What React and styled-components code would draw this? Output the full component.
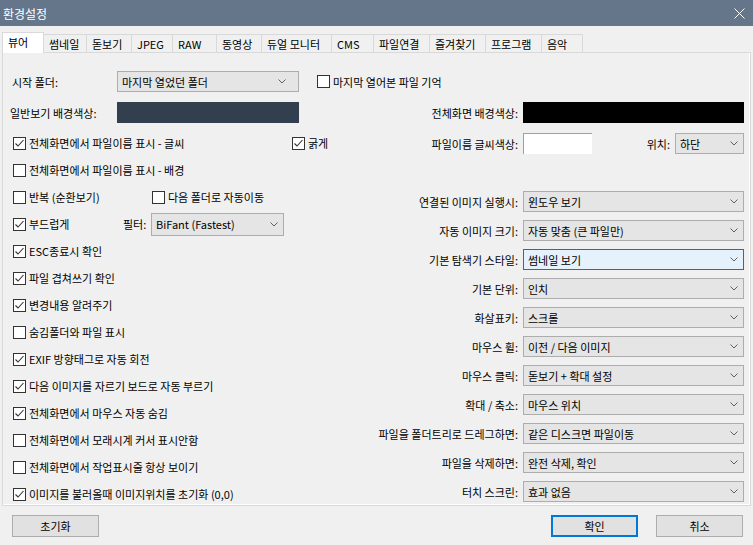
import React from "react";
import styled, { createGlobalStyle } from "styled-components";

const GlobalStyle = createGlobalStyle`
  html, body {
    margin: 0;
    padding: 0;
    background: #f0f0f0;
  }
  body {
    font-family: "Noto Sans CJK KR", "Noto Sans", sans-serif;
    font-size: 11px;
    color: #000;
  }
`

const Window = styled.div`
  width: 753px;
  height: 545px;
  background: #f0f0f0;
  display: flex;
  flex-direction: column;
  overflow: hidden;
`

const TitleBar = styled.div`
  height: 26px;
  flex: none;
  background: #65768a;
  color: #fff;
  display: flex;
  align-items: center;
  justify-content: space-between;
  padding: 0 8px 0 3px;
  font-size: 12px;
`

const TabStrip = styled.div`
  display: flex;
  align-items: flex-end;
  height: 20px;
  margin-top: 6px;
  padding-left: 2px;
  position: relative;
  z-index: 1;
`

const Tab = styled.div`
  box-sizing: border-box;
  width: ${p => p.$w}px;
  height: ${p => (p.$active ? 21 : 18)}px;
  margin-bottom: ${p => (p.$active ? -1 : 0)}px;
  line-height: 18px;
  padding-left: 5px;
  white-space: nowrap;
  background: ${p => (p.$active ? "#fff" : "#f0f0f0")};
  border: 1px solid #d9d9d9;
  border-bottom: none;
  border-left: ${p => (p.$first ? "1px solid #d9d9d9" : "none")};
`

const Panel = styled.div`
  box-sizing: border-box;
  height: 454px;
  margin: 0 2px;
  border: 1px solid #d9d9d9;
  box-shadow: inset -1px -1px 0 #fff;
  padding: 18px 6px 0 7px;
`

const TopRow = styled.div`
  display: flex;
  align-items: center;
  height: 21px;
`

const FieldLabel = styled.span`
  width: ${p => p.$w}px;
  padding-left: ${p => p.$indent || 0}px;
  box-sizing: border-box;
  flex: none;
  white-space: nowrap;
`

const SelectBox = styled.div`
  box-sizing: border-box;
  width: ${p => (p.$w ? `${p.$w}px` : "100%")};
  height: ${p => p.$h || 21}px;
  flex: none;
  display: flex;
  align-items: center;
  justify-content: space-between;
  padding: 0 ${p => p.$arrow || 5}px 0 4px;
  background: ${p => (p.$focus ? "#e5f1fb" : "#e5e5e5")};
  border: 1px solid ${p => (p.$focus ? "#0078d7" : "#adadad")};
  white-space: nowrap;
`

const Swatch = styled.div`
  box-sizing: border-box;
  width: ${p => (p.$w ? `${p.$w}px` : "100%")};
  height: 21px;
  flex: none;
  background: ${p => p.$color};
  border-top: 1px solid ${p => (p.$color === "#fff" ? "#a0a0a0" : p.$color)};
  border-left: 1px solid ${p => (p.$color === "#fff" ? "#a0a0a0" : p.$color)};
`

const Columns = styled.div`
  display: flex;
  margin-top: 10px;
`

const LeftCol = styled.div`
  width: 350px;
  flex: none;
`

const ColorRow = styled.div`
  display: flex;
  align-items: center;
  height: 21px;
`

const CheckList = styled.div`
  display: flex;
  flex-direction: column;
  gap: 11px;
  margin-top: 12px;
  padding-left: 3px;
`

const CheckRow = styled.div`
  display: flex;
  align-items: center;
  height: 16px;
`

const CheckCell = styled.label`
  display: flex;
  align-items: center;
  gap: 3px;
  width: ${p => (p.$w ? `${p.$w}px` : "auto")};
  flex: none;
  white-space: nowrap;
`

const Box = styled.span`
  box-sizing: border-box;
  width: 13px;
  height: 13px;
  flex: none;
  border: 1px solid #333;
  background: #fff;
  display: flex;
  align-items: center;
  justify-content: center;
`

const RightCol = styled.div`
  flex: 1;
  display: flex;
  flex-direction: column;
`

const FieldRow = styled.div`
  display: grid;
  grid-template-columns: 1fr 221px;
  column-gap: 5px;
  align-items: center;
  height: 21px;
  margin-top: ${p => p.$top || 0}px;
`

const RightLabel = styled.span`
  text-align: right;
  white-space: nowrap;
`

const SplitCell = styled.div`
  display: flex;
  align-items: center;
  gap: 5px;
`

const Spacer = styled.div`
  flex: 1;
`

const Footer = styled.div`
  display: flex;
  align-items: flex-start;
  padding: 9px 10px 0 12px;
  gap: 18px;
`

const Button = styled.div`
  box-sizing: border-box;
  width: 87px;
  height: 22px;
  display: flex;
  align-items: center;
  justify-content: center;
  background: #e1e1e1;
  border: ${p => (p.$default ? "2px solid #0078d7" : "1px solid #adadad")};
  margin-left: ${p => (p.$push ? "auto" : "0")};
`

const Chevron = () => (
  <svg width="8" height="5" viewBox="0 0 8 5">
    <path d="M0.5 0.5 L4 4 L7.5 0.5" fill="none" stroke="#606060" strokeWidth="1" />
  </svg>
)

const Check = () => (
  <svg width="11" height="11" viewBox="0 0 11 11">
    <path d="M1.5 5.5 L4 8 L9.5 2" fill="none" stroke="#333" strokeWidth="1.1" />
  </svg>
)

function Select({ value, w, h, focus, arrow }) {
  return (
    <SelectBox $w={w} $h={h} $focus={focus} $arrow={arrow}>
      <span>{value}</span>
      <Chevron />
    </SelectBox>
  )
}

function Checkbox({ label, checked, w }) {
  return (
    <CheckCell $w={w}>
      <Box>{checked && <Check />}</Box>
      {label}
    </CheckCell>
  )
}

const tabs = [
  ["뷰어", 42], ["썸네일", 43], ["돋보기", 45], ["JPEG", 41], ["RAW", 44], ["동영상", 45],
  ["듀얼 모니터", 70], ["CMS", 42], ["파일연결", 56], ["즐겨찾기", 56], ["프로그램", 56], ["음악", 41],
];

const checks = [
  { label: "전체화면에서 파일이름 표시 - 글씨", checked: true, w: 279, extra: { label: "굵게", checked: true } },
  { label: "전체화면에서 파일이름 표시 - 배경", checked: false },
  { label: "반복 (순환보기)", checked: false, w: 139, extra: { label: "다음 폴더로 자동이동", checked: false } },
  { label: "부드럽게", checked: true, w: 110, filter: true },
  { label: "ESC종료시 확인", checked: true },
  { label: "파일 겹쳐쓰기 확인", checked: true },
  { label: "변경내용 알려주기", checked: true },
  { label: "숨김폴더와 파일 표시", checked: false },
  { label: "EXIF 방향태그로 자동 회전", checked: true },
  { label: "다음 이미지를 자르기 보드로 자동 부르기", checked: true },
  { label: "전체화면에서 마우스 자동 숨김", checked: true },
  { label: "전체화면에서 모래시계 커서 표시안함", checked: false },
  { label: "전체화면에서 작업표시줄 항상 보이기", checked: false },
  { label: "이미지를 불러올때 이미지위치를 초기화 (0,0)", checked: true },
];

const selects = [
  ["연결된 이미지 실행시:", "윈도우 보기"],
  ["자동 이미지 크기:", "자동 맞춤 (큰 파일만)"],
  ["기본 탐색기 스타일:", "썸네일 보기", true],
  ["기본 단위:", "인치"],
  ["화살표키:", "스크롤"],
  ["마우스 휠:", "이전 / 다음 이미지"],
  ["마우스 클릭:", "돋보기 + 확대 설정"],
  ["확대 / 축소:", "마우스 위치"],
  ["파일을 폴더트리로 드레그하면:", "같은 디스크면 파일이동"],
  ["파일을 삭제하면:", "완전 삭제, 확인"],
  ["터치 스크린:", "효과 없음"],
];

export default function App() {
  return (
    <Window>
      <GlobalStyle />
      <TitleBar>
        <span>환경설정</span>
        <svg width="11" height="11" viewBox="0 0 11 11">
          <path d="M0.5 0.5 L10.5 10.5 M10.5 0.5 L0.5 10.5" stroke="#fff" strokeWidth="1" />
        </svg>
      </TitleBar>

      <TabStrip>
        {tabs.map(([name, w], i) => (
          <Tab key={name} $w={w} $active={i === 0} $first={i === 0}>{name}</Tab>
        ))}
      </TabStrip>

      <Panel>
        <TopRow>
          <FieldLabel $w={107} $indent={2}>시작 폴더:</FieldLabel>
          <Select value="마지막 열었던 폴더" w={182} arrow={12} />
          <CheckCell style={{ marginLeft: 18 }}>
            <Box />
            마지막 열어본 파일 기억
          </CheckCell>
        </TopRow>

        <Columns>
          <LeftCol>
            <ColorRow>
              <FieldLabel $w={107}>일반보기 배경색상:</FieldLabel>
              <Swatch $w={182} $color="#323f4e" />
            </ColorRow>

            <CheckList>
              {checks.map(c => (
                <CheckRow key={c.label}>
                  <Checkbox label={c.label} checked={c.checked} w={c.w} />
                  {c.extra && <Checkbox label={c.extra.label} checked={c.extra.checked} />}
                  {c.filter && (
                    <>
                      <FieldLabel $w={28}>필터:</FieldLabel>
                      <Select value="BiFant (Fastest)" w={133} h={23} />
                    </>
                  )}
                </CheckRow>
              ))}
            </CheckList>
          </LeftCol>

          <RightCol>
            <FieldRow>
              <RightLabel>전체화면 배경색상:</RightLabel>
              <Swatch $color="#000" />
            </FieldRow>
            <FieldRow $top={10}>
              <RightLabel>파일이름 글씨색상:</RightLabel>
              <SplitCell>
                <Swatch $w={69} $color="#fff" />
                <Spacer />
                <span>위치:</span>
                <Select value="하단" w={69} />
              </SplitCell>
            </FieldRow>

            {selects.map(([label, value, focus], i) => (
              <FieldRow key={label} $top={i === 0 ? 37 : 8}>
                <RightLabel>{label}</RightLabel>
                <Select value={value} focus={focus} />
              </FieldRow>
            ))}
          </RightCol>
        </Columns>
      </Panel>

      <Footer>
        <Button>초기화</Button>
        <Button $push $default>확인</Button>
        <Button>취소</Button>
      </Footer>
    </Window>
  )
}
